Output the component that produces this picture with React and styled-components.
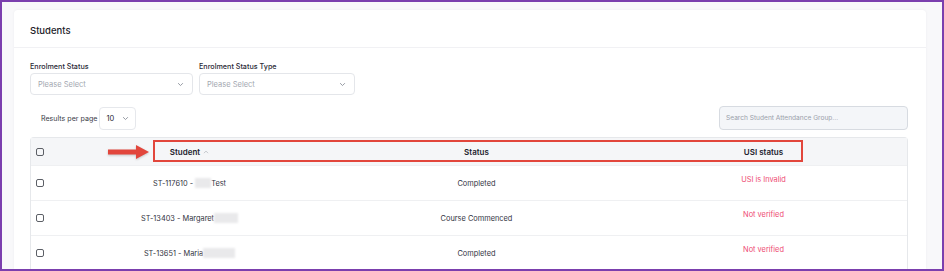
import React from "react";
import styled, { createGlobalStyle } from "styled-components";

const GlobalStyle = createGlobalStyle`
    body {
        margin: 0;
        background: #ffffff;
        font-family: Inter, "Noto Sans", sans-serif;
    }
`;

const students = [
    { id: "ST-117610 - ", blur: 16, after: "Test", status: "Completed", usi: "USI is Invalid" },
    { id: "ST-13403 - Margaret", blur: 24, after: "", status: "Course Commenced", usi: "Not verified" },
    { id: "ST-13651 - Maria", blur: 32, after: "", status: "Completed", usi: "Not verified" },
];

const Chevron = ({ size = 7 }) => (
    <svg width={size} height={size} viewBox="0 0 10 10" fill="none">
        <path d="M2 3.5 L5 6.5 L8 3.5" stroke="#8a8f99" strokeWidth="1.3" strokeLinecap="round" strokeLinejoin="round" />
    </svg>
);

const App = () => {
    return (
        <>
            <GlobalStyle />
            <Frame>
                <Card>
                    <CardHeader>Students</CardHeader>
                    <CardBody>
                        <Filters>
                            <FilterGroup>
                                <FilterLabel>Enrolment Status</FilterLabel>
                                <Select width={163}>
                                    <Placeholder>Please Select</Placeholder>
                                    <Chevron />
                                </Select>
                            </FilterGroup>
                            <FilterGroup>
                                <FilterLabel>Enrolment Status Type</FilterLabel>
                                <Select width={156}>
                                    <Placeholder>Please Select</Placeholder>
                                    <Chevron />
                                </Select>
                            </FilterGroup>
                        </Filters>

                        <Toolbar>
                            <PageSize>
                                <SmallLabel>Results per page</SmallLabel>
                                <PageSelect>
                                    10
                                    <Chevron />
                                </PageSelect>
                            </PageSize>
                            <Search placeholder="Search Student Attendance Group..." />
                        </Toolbar>

                        <Table>
                            <HeadRow>
                                <CheckCell><Checkbox /></CheckCell>
                                <HeadCell>
                                    Student
                                    <SortMark>
                                        <svg width="6" height="6" viewBox="0 0 10 10" fill="none">
                                            <path d="M2 6.5 L5 3.5 L8 6.5" stroke="#b5b9c0" strokeWidth="1.3" strokeLinecap="round" />
                                        </svg>
                                    </SortMark>
                                </HeadCell>
                                <HeadCell>Status</HeadCell>
                                <HeadCell>USI status</HeadCell>

                                <Arrow width="44" height="16" viewBox="0 0 44 16">
                                    <path d="M1 5.5 H29 V1 L42 8 L29 15 V10.5 H1 Z" fill="#e2463c" />
                                </Arrow>
                                <Highlight />
                            </HeadRow>

                            {students.map((s) => (
                                <Row key={s.id}>
                                    <CheckCell><Checkbox /></CheckCell>
                                    <Cell>
                                        {s.id}
                                        <Blurred style={{ width: s.blur }} />
                                        {s.after}
                                    </Cell>
                                    <Cell>{s.status}</Cell>
                                    <Cell top>
                                        <Warning>{s.usi}</Warning>
                                    </Cell>
                                </Row>
                            ))}
                        </Table>
                    </CardBody>
                </Card>
            </Frame>
        </>
    );
};

const Frame = styled.div`
    width: 944px;
    height: 271px;
    box-sizing: border-box;
    border: 2px solid #7b3fae;
    background: #f8f8fa;
    padding: 8px 16px 0 12px;
    overflow: hidden;
`;

const Card = styled.div`
    background: #ffffff;
    border-radius: 4px 4px 0 0;
    box-shadow: 0 0 3px rgba(30, 30, 60, 0.05);
    height: 100%;
`;

const CardHeader = styled.div`
    height: 38px;
    box-sizing: border-box;
    display: flex;
    align-items: center;
    padding: 4px 16px 0;
    border-bottom: 1px solid #f1f1f4;
    font-size: 9.5px;
    font-weight: 500;
    color: #1d1d29;
`;

const CardBody = styled.div`
    padding: 14px 18px 0 16px;
`;

const Filters = styled.div`
    display: flex;
    gap: 6px;
`;

const FilterGroup = styled.div`
    display: flex;
    flex-direction: column;
    gap: 1px;
`;

const FilterLabel = styled.label`
    font-size: 7.2px;
    line-height: 10px;
    font-weight: 500;
    color: #2a2a36;
`;

const Select = styled.div`
    width: ${(p) => p.width}px;
    height: 22px;
    box-sizing: border-box;
    border: 1px solid #e4e6ea;
    border-radius: 4px;
    padding: 0 8px 0 7px;
    display: flex;
    align-items: center;
    justify-content: space-between;
`;

const Placeholder = styled.span`
    font-size: 7.5px;
    color: #a3a7b0;
`;

const Toolbar = styled.div`
    display: flex;
    align-items: center;
    justify-content: space-between;
    margin-top: 11px;
`;

const PageSize = styled.div`
    display: flex;
    align-items: center;
    gap: 2px;
    padding-left: 11px;
`;

const SmallLabel = styled.span`
    font-size: 7.1px;
    color: #3a3a46;
`;

const PageSelect = styled.div`
    width: 37px;
    height: 23px;
    box-sizing: border-box;
    border: 1px solid #e6e8ec;
    border-radius: 4px;
    display: flex;
    align-items: center;
    gap: 8px;
    padding-left: 6px;
    font-size: 7.5px;
    color: #2a2a36;
`;

const Search = styled.input`
    width: 189px;
    height: 24px;
    box-sizing: border-box;
    border: 1px solid #d7dbe1;
    border-radius: 4px;
    background: #f4f6f9;
    padding: 0 6px;
    font-family: inherit;
    font-size: 6.6px;
    outline: none;

    &::placeholder {
        color: #9aa0aa;
    }
`;

const Table = styled.div`
    margin-top: 7px;
    border: 1px solid #e6e8eb;
    border-bottom: none;
    border-radius: 4px 4px 0 0;
`;

const grid = `
    display: grid;
    grid-template-columns: 15px 1fr 1fr 1fr;
`;

const HeadRow = styled.div`
    ${grid}
    position: relative;
    height: 27px;
    background: #f5f6f8;
    align-items: center;
`;

const Row = styled.div`
    ${grid}
    height: 34px;
    border-top: 1px solid #eff0f2;
    align-items: center;
`;

const CheckCell = styled.div`
    display: flex;
    padding-left: 5px;
`;

const Checkbox = styled.span`
    width: 6px;
    height: 6px;
    border: 1.2px solid #5c5f66;
    border-radius: 2px;
`;

const HeadCell = styled.div`
    display: flex;
    justify-content: center;
    align-items: center;
    gap: 3px;
    font-size: 8px;
    font-weight: 600;
    color: #22222e;
`;

const SortMark = styled.span`
    display: flex;
`;

const Cell = styled.div`
    display: flex;
    justify-content: center;
    align-items: center;
    align-self: ${(p) => (p.top ? "start" : "center")};
    padding-top: ${(p) => (p.top ? "9px" : "0")};
    font-size: 7.4px;
    color: #33343f;
    white-space: pre;
`;

const Blurred = styled.span`
    display: inline-block;
    height: 10px;
    background: #e9e9eb;
    filter: blur(0.8px);
`;

const Warning = styled.span`
    color: #ee4b73;
`;

const Highlight = styled.div`
    position: absolute;
    left: 122px;
    top: 2px;
    width: 650px;
    height: 22px;
    box-sizing: border-box;
    border: 2px solid #e2463c;
    pointer-events: none;
`;

const Arrow = styled.svg`
    position: absolute;
    left: 76px;
    top: 6px;
    filter: drop-shadow(0 1px 1px rgba(0, 0, 0, 0.2));
`;

export default App;
